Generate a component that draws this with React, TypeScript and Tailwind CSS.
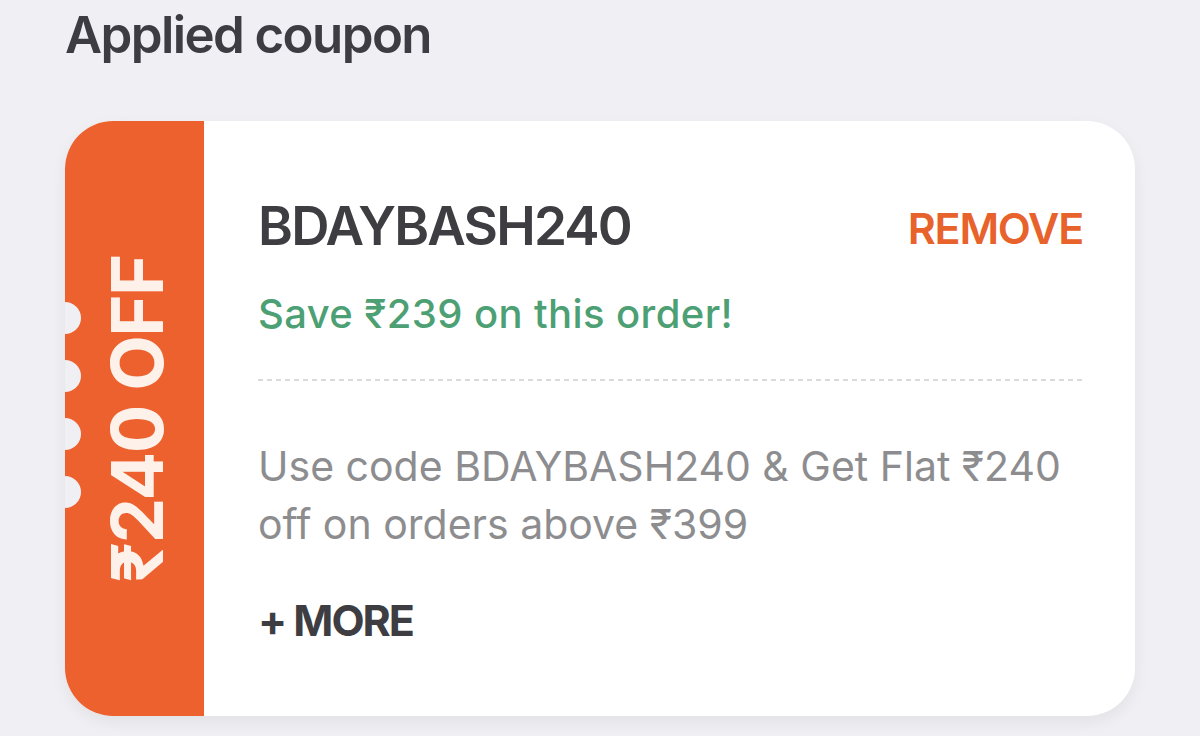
import React from "react";

export default function App() {
  const font = { fontFamily: "Inter, 'Noto Sans', sans-serif" };
  return (
    <div className="w-full h-[736px] bg-[#f0eff4] overflow-hidden" style={font}>
      <div className="pl-[65px] pt-[9px]">
        <h1 className="text-[51px] leading-[52px] font-semibold text-[#3c3c42] tracking-[-1.6px]">
          Applied coupon
        </h1>
        <div className="mt-[60px] w-[1070px] h-[595px] rounded-[48px] overflow-hidden flex bg-white shadow-[0_6px_16px_rgba(0,0,0,0.06)]">
          <div className="relative w-[139px] shrink-0 bg-[#ec612e]">
            <div className="absolute left-[-16px] top-[181px] w-[32px] h-[32px] rounded-full bg-[#f0eff4]" />
            <div className="absolute left-[-16px] top-[239px] w-[32px] h-[32px] rounded-full bg-[#f0eff4]" />
            <div className="absolute left-[-16px] top-[297px] w-[32px] h-[32px] rounded-full bg-[#f0eff4]" />
            <div className="absolute left-[-16px] top-[355px] w-[32px] h-[32px] rounded-full bg-[#f0eff4]" />
            <div className="absolute inset-0 flex items-center justify-center">
              <div className="-rotate-90 whitespace-nowrap text-[72px] leading-[72px] font-bold text-[#fdf1ea] tracking-[-1.5px] translate-x-[2px]">
                ₹240 OFF
              </div>
            </div>
          </div>
          <div className="flex-1 pl-[54px] pr-[52px] pt-[78px] flex flex-col">
            <div className="flex items-start justify-between">
              <div className="text-[53px] leading-[55px] font-semibold text-[#3d3d42] tracking-[-1.8px]">
                BDAYBASH240
              </div>
              <div className="mt-[7px] text-[43px] leading-[44px] font-semibold text-[#e8622b] tracking-[-1.2px]">
                REMOVE
              </div>
            </div>
            <div className="mt-[40px] text-[40px] leading-[40px] font-medium text-[#4d9f74] tracking-[0.4px]">
              Save ₹239 on this order!
            </div>
            <div className="mt-[45px] h-[2px] w-full bg-[repeating-linear-gradient(90deg,#dadada_0_5px,transparent_5px_9px)]" />
            <div className="mt-[56px] text-[41px] leading-[58px] font-normal text-[#8d8d90] tracking-[0px]">
              Use code BDAYBASH240 &amp; Get Flat ₹240
              <br />
              off on orders above ₹399
            </div>
            <div className="mt-[45px] text-[43px] leading-[44px] font-bold text-[#3d3d42] tracking-[-2px]">
              + MORE
            </div>
          </div>
        </div>
      </div>
    </div>
  );
}
